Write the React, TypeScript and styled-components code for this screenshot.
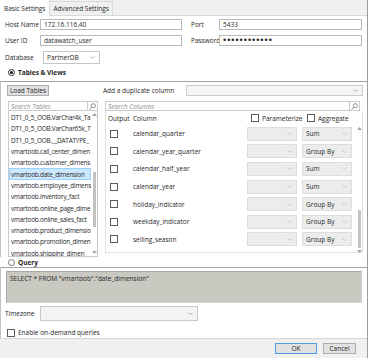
import * as React from 'react';
import styled, { createGlobalStyle } from 'styled-components';

const GlobalStyle = createGlobalStyle`
  html, body {
    margin: 0;
    padding: 0;
    background: #fff;
  }
  body {
    font-family: 'Open Sans', 'Liberation Sans', sans-serif;
    font-size: 6.5px;
    color: #262626;
  }
  * {
    box-sizing: border-box;
  }
`;

const Dialog = styled.div`
  width: 368px;
  height: 358px;
  display: flex;
  flex-direction: column;
  background: #fff;
  border-right: 1px solid #9c9c9c;
  overflow: hidden;
`;

const TabStrip = styled.div`
  flex: none;
  height: 16px;
  display: flex;
  align-items: flex-end;
  background: #f0f0f0;
  border-bottom: 1px solid #d9d9d9;
`;

const Tab = styled.div<{ $active?: boolean }>`
  height: ${p => (p.$active ? '16px' : '14px')};
  margin-bottom: ${p => (p.$active ? '-1px' : '0')};
  padding: 0 ${p => (p.$active ? '4px' : '3px')};
  display: flex;
  align-items: center;
  white-space: nowrap;
  background: ${p => (p.$active ? '#fff' : '#f0f0f0')};
  border-right: 1px solid #d9d9d9;
  border-top: ${p => (p.$active ? 'none' : '1px solid #d9d9d9')};
`;

const ConnGrid = styled.div`
  display: grid;
  grid-template-columns: 35px 142px 37px 143px;
  grid-template-rows: 11px 11px 13px;
  row-gap: 5px;
  align-items: center;
  padding: 3px 0 0 5px;
`;

const FieldLabel = styled.span<{ $indent?: number }>`
  padding-left: ${p => p.$indent ?? 0}px;
  white-space: nowrap;
`;

const TextInput = styled.div`
  height: 11px;
  display: flex;
  align-items: center;
  padding-left: 3px;
  border: 1px solid #b9b9b9;
  background: #fff;
  white-space: nowrap;
`;

const Dots = styled.span`
  font-family: 'Liberation Sans', sans-serif;
  font-size: 9px;
  letter-spacing: 1px;
  line-height: 1;
  margin-top: -1px;
`;

const Select = styled.div<{ $w?: number; $h?: number; $bg?: string; $border?: string }>`
  width: ${p => (p.$w ? `${p.$w}px` : 'auto')};
  height: ${p => p.$h ?? 11}px;
  display: flex;
  align-items: center;
  justify-content: space-between;
  padding: 0 4px 0 3px;
  background: ${p => p.$bg ?? '#fff'};
  border: 1px solid ${p => p.$border ?? '#c6c6c6'};
  white-space: nowrap;
`;

const DbSelect = styled(Select)`
  margin-left: 3px;
`;

const RadioRow = styled.label<{ $h: number; $top?: number }>`
  height: ${p => p.$h}px;
  margin-top: ${p => p.$top ?? 0}px;
  display: flex;
  align-items: center;
  gap: 3px;
  padding-left: 8px;
  font-weight: 700;
`;

const RadioDot = styled.span<{ $checked?: boolean }>`
  width: 7px;
  height: 7px;
  border-radius: 50%;
  border: 1px solid ${p => (p.$checked ? '#333' : '#777')};
  display: flex;
  align-items: center;
  justify-content: center;
  &::after {
    content: '';
    width: 3px;
    height: 3px;
    border-radius: 50%;
    background: ${p => (p.$checked ? '#111' : 'transparent')};
  }
`;

const TablesSection = styled.section`
  margin-top: 3px;
  border-top: 1px solid #a4a4a4;
  border-left: 1px solid #c4c4c4;
`;

const TopRow = styled.div`
  display: grid;
  grid-template-columns: 90px 1fr;
  column-gap: 7px;
  align-items: center;
  padding: 3px 4px 0 6px;
`;

const Button = styled.button<{ $w: number; $primary?: boolean }>`
  width: ${p => p.$w}px;
  height: 11px;
  padding: 0;
  font: inherit;
  color: #262626;
  background: #e1e1e1;
  border: 1px solid ${p => (p.$primary ? '#4f9ae3' : '#adadad')};
  display: flex;
  align-items: center;
  justify-content: center;
  white-space: nowrap;
`;

const DupCell = styled.div`
  display: flex;
  align-items: center;
`;

const DupLabel = styled.span`
  margin-left: -1px;
  white-space: nowrap;
`;

const DupSelect = styled(Select)`
  margin-left: auto;
`;

const BodyGrid = styled.div`
  display: grid;
  grid-template-columns: 90px 1fr;
  column-gap: 7px;
  padding: 5px 4px 0 7px;
`;

const Column = styled.div`
  display: flex;
  flex-direction: column;
`;

const SearchBox = styled.div<{ $trim?: number }>`
  height: 10px;
  margin-right: ${p => p.$trim ?? 0}px;
  display: flex;
  border: 1px solid #cacaca;
`;

const SearchText = styled.span`
  flex: 1;
  display: flex;
  align-items: center;
  padding-left: 2px;
  font-style: italic;
  color: #8c8c8c;
  white-space: nowrap;
`;

const SearchIcon = styled.span`
  width: 10px;
  display: flex;
  align-items: center;
  justify-content: center;
  border-left: 1px solid #cacaca;
`;

const TableList = styled.div`
  height: 146px;
  display: flex;
  border: 1px solid #cacaca;
  border-top: none;
`;

const ListItems = styled.div`
  flex: 1;
  min-width: 0;
  overflow: hidden;
  padding-top: 1px;
`;

const ListItem = styled.div<{ $selected?: boolean }>`
  height: 11.3px;
  display: flex;
  align-items: center;
  padding-left: 2px;
  font-size: 6.4px;
  letter-spacing: -0.2px;
  white-space: nowrap;
  overflow: hidden;
  background: ${p => (p.$selected ? '#cce8ff' : 'transparent')};
  outline: ${p => (p.$selected ? '1px solid #99d1ff' : 'none')};
  outline-offset: -1px;
`;

const Scrollbar = styled.div<{ $w: number }>`
  width: ${p => p.$w}px;
  flex: none;
  display: flex;
  flex-direction: column;
  align-items: center;
`;

const ScrollArrow = styled.span`
  height: 7px;
  display: flex;
  align-items: center;
  justify-content: center;
`;

const ScrollTrack = styled.div`
  flex: 1;
  width: 100%;
  display: flex;
  justify-content: center;
`;

const ScrollThumb = styled.div`
  width: 3px;
  background: #c2c2c2;
`;

const ColumnsPanel = styled.div`
  height: 142px;
  display: flex;
  flex-direction: column;
  border: 1px solid #e0e0e0;
  border-top: none;
`;

const rowGrid = `
  display: grid;
  grid-template-columns: 27px 114px 55px 50px;
  align-items: center;
`;

const HeaderRow = styled.div`
  ${rowGrid}
  height: 14px;
  flex: none;
`;

const HeaderCell = styled.span<{ $indent?: number }>`
  padding-left: ${p => p.$indent ?? 0}px;
  display: flex;
  align-items: center;
  gap: 3px;
  white-space: nowrap;
`;

const ColumnsBody = styled.div`
  flex: 1;
  display: flex;
`;

const Rows = styled.div`
  flex: 1;
`;

const Row = styled.div`
  ${rowGrid}
  height: 17.6px;
`;

const CheckBox = styled.span<{ $indent?: number }>`
  width: 8px;
  height: 8px;
  margin-left: ${p => p.$indent ?? 0}px;
  border: 1px solid #5c5c5c;
  background: #fff;
  flex: none;
`;

const ColumnName = styled.span`
  white-space: nowrap;
`;

const QuerySection = styled.section`
  flex: 1;
  display: flex;
  flex-direction: column;
  border-top: 1px solid #a4a4a4;
  border-left: 1px solid #c4c4c4;
  padding: 3px 5px 0 5px;
`;

const QueryBox = styled.div`
  height: 32px;
  padding: 2px 3px;
  background: #c9c9c1;
  border: 1px solid #a9a9a2;
  border-right-color: #d6d6d0;
  border-bottom-color: #d6d6d0;
  white-space: nowrap;
`;

const TimezoneRow = styled.div`
  margin: 3px 0 0 -1px;
  height: 15px;
  display: grid;
  grid-template-columns: 35px 158px;
  align-items: center;
`;

const CheckRow = styled.label`
  margin-top: 7px;
  height: 9px;
  display: flex;
  align-items: center;
  gap: 3px;
  padding-left: 1px;
`;

const Footer = styled.div`
  flex: none;
  height: 20px;
  display: flex;
  align-items: center;
  justify-content: flex-end;
  gap: 6px;
  padding-right: 11px;
  background: #f0f0f0;
  border-top: 1px solid #d6d6d6;
`;

function Chevron({ color = '#9a9a9a' }: { color?: string }) {
  return (
    <svg width="5" height="3" viewBox="0 0 5 3">
      <polyline points="0.5,0.5 2.5,2.5 4.5,0.5" fill="none" stroke={color} strokeWidth="0.8" />
    </svg>
  );
}

function Arrow({ up }: { up?: boolean }) {
  return (
    <svg width="5" height="3" viewBox="0 0 5 3">
      <polygon points={up ? '0,3 2.5,0 5,3' : '0,0 2.5,3 5,0'} fill="#a6a6a6" />
    </svg>
  );
}

function Magnifier() {
  return (
    <svg width="7" height="7" viewBox="0 0 7 7">
      <circle cx="4.3" cy="2.7" r="2.1" fill="none" stroke="#777" strokeWidth="0.8" />
      <line x1="2.8" y1="4.2" x2="0.6" y2="6.4" stroke="#777" strokeWidth="0.9" />
    </svg>
  );
}

function ThinScroll({ w, thumbTop, thumbHeight }: { w: number; thumbTop: number; thumbHeight: number }) {
  return (
    <Scrollbar $w={w}>
      <ScrollArrow>
        <Arrow up />
      </ScrollArrow>
      <ScrollTrack>
        <ScrollThumb style={{ marginTop: thumbTop, height: thumbHeight }} />
      </ScrollTrack>
      <ScrollArrow>
        <Arrow />
      </ScrollArrow>
    </Scrollbar>
  );
}

// names as far as the narrow list shows them
const tables = [
  'DT1_0_5_OOB.VarChar4k_Ta',
  'DT1_0_5_OOB.VarChar65k_T',
  'DT1_0_5_OOB.__DATATYPE_',
  'vmartoob.call_center_dimen',
  'vmartoob.customer_dimens',
  'vmartoob.date_dimension',
  'vmartoob.employee_dimens',
  'vmartoob.inventory_fact',
  'vmartoob.online_page_dime',
  'vmartoob.online_sales_fact',
  'vmartoob.product_dimensio',
  'vmartoob.promotion_dimen',
  'vmartoob.shipping_dimen',
];

const columns = [
  { name: 'calendar_quarter', agg: 'Sum' },
  { name: 'calendar_year_quarter', agg: 'Group By' },
  { name: 'calendar_half_year', agg: 'Sum' },
  { name: 'calendar_year', agg: 'Sum' },
  { name: 'holiday_indicator', agg: 'Group By' },
  { name: 'weekday_indicator', agg: 'Group By' },
  { name: 'selling_season', agg: 'Group By' },
];

export default function App() {
  const [selected, setSelected] = React.useState('vmartoob.date_dimension');

  return (
    <>
      <GlobalStyle />
      <Dialog>
        <TabStrip>
          <Tab $active>Basic Settings</Tab>
          <Tab>Advanced Settings</Tab>
        </TabStrip>

        <ConnGrid>
          <FieldLabel>Host Name</FieldLabel>
          <TextInput>172.16.116.40</TextInput>
          <FieldLabel $indent={9}>Port</FieldLabel>
          <TextInput>5433</TextInput>

          <FieldLabel>User ID</FieldLabel>
          <TextInput>datawatch_user</TextInput>
          <FieldLabel $indent={9}>Password</FieldLabel>
          <TextInput>
            <Dots>••••••••••••</Dots>
          </TextInput>

          <FieldLabel>Database</FieldLabel>
          <DbSelect $w={57} $h={13}>
            PartnerDB
            <Chevron />
          </DbSelect>
        </ConnGrid>

        <RadioRow $h={11} $top={3}>
          <RadioDot $checked />
          Tables &amp; Views
        </RadioRow>

        <TablesSection>
          <TopRow>
            <Button $w={42}>Load Tables</Button>
            <DupCell>
              <DupLabel>Add a duplicate column</DupLabel>
              <DupSelect $w={177} $bg="#f5f5f5" $border="#cacaca">
                <span />
                <Chevron />
              </DupSelect>
            </DupCell>
          </TopRow>

          <BodyGrid>
            <Column>
              <SearchBox>
                <SearchText>Search Tables</SearchText>
                <SearchIcon>
                  <Magnifier />
                </SearchIcon>
              </SearchBox>
              <TableList>
                <ListItems>
                  {tables.map(t => (
                    <ListItem key={t} $selected={t === selected} onClick={() => setSelected(t)}>
                      {t}
                    </ListItem>
                  ))}
                </ListItems>
                <ThinScroll w={6} thumbTop={54} thumbHeight={55} />
              </TableList>
            </Column>

            <Column>
              <SearchBox $trim={3}>
                <SearchText>Search Columns</SearchText>
                <SearchIcon>
                  <Magnifier />
                </SearchIcon>
              </SearchBox>
              <ColumnsPanel>
                <HeaderRow>
                  <HeaderCell $indent={2}>Output</HeaderCell>
                  <HeaderCell>Column</HeaderCell>
                  <HeaderCell $indent={4}>
                    <CheckBox />
                    Parameterize
                  </HeaderCell>
                  <HeaderCell $indent={5}>
                    <CheckBox />
                    Aggregate
                  </HeaderCell>
                </HeaderRow>
                <ColumnsBody>
                  <Rows>
                    {columns.map(c => (
                      <Row key={c.name}>
                        <CheckBox $indent={4} />
                        <ColumnName>{c.name}</ColumnName>
                        <Select $w={50} $h={14} $bg="#ececec" $border="#dddddd">
                          <span />
                          <Chevron color="#c0c0c0" />
                        </Select>
                        <Select $w={50} $h={14} $bg="#ececec" $border="#dddddd">
                          {c.agg}
                          <Chevron color="#c0c0c0" />
                        </Select>
                      </Row>
                    ))}
                  </Rows>
                  <ThinScroll w={6} thumbTop={78} thumbHeight={38} />
                </ColumnsBody>
              </ColumnsPanel>
            </Column>
          </BodyGrid>
        </TablesSection>

        <RadioRow $h={10}>
          <RadioDot />
          Query
        </RadioRow>

        <QuerySection>
          <QueryBox>SELECT * FROM "vmartoob"."date_dimension"</QueryBox>
          <TimezoneRow>
            <FieldLabel>Timezone</FieldLabel>
            <Select $h={15} $bg="#f3f3f3" $border="#c9c9c9">
              <span />
              <Chevron />
            </Select>
          </TimezoneRow>
          <CheckRow>
            <CheckBox />
            Enable on-demand queries
          </CheckRow>
        </QuerySection>

        <Footer>
          <Button $w={42} $primary>
            OK
          </Button>
          <Button $w={33}>Cancel</Button>
        </Footer>
      </Dialog>
    </>
  );
}
